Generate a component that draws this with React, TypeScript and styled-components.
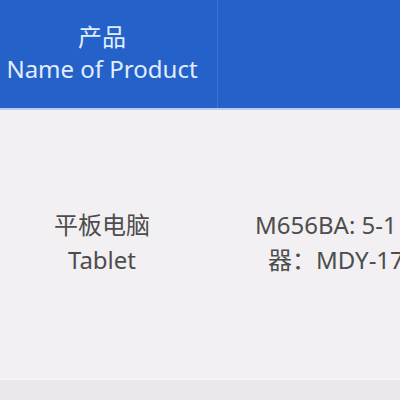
import React from "react";
import styled, { createGlobalStyle } from "styled-components";

const Global = createGlobalStyle`
  html, body { margin: 0; padding: 0; background: #eae8ea; }
  body { font-family: "Noto Sans", "Noto Sans CJK SC", sans-serif; }
`;

const Table = styled.div`
  width: 400px;
  height: 400px;
  overflow: hidden;
  display: flex;
  flex-direction: column;
  background: #eae8ea;
`;

const Row = styled.div<{ $header?: boolean; $h: number }>`
  display: grid;
  grid-template-columns: 217px 1px 182px;
  height: ${(p) => p.$h}px;
  background: ${(p) => (p.$header ? "#2462c9" : "#f2f0f2")};
  color: ${(p) => (p.$header ? "#e2edff" : "#4d4d4d")};
  border-bottom: ${(p) => (p.$header ? "2px solid #b9cdea" : "2px solid #f7f5f7")};
  flex-shrink: 0;
  box-sizing: border-box;
`;

const Divider = styled.div<{ $show?: boolean }>`
  background: ${(p) => (p.$show ? "#3b74d6" : "transparent")};
`;

const Cell = styled.div<{ $pt?: number }>`
  display: flex;
  flex-direction: column;
  justify-content: center;
  align-items: center;
  padding-right: 13px;
  padding-bottom: ${(p) => p.$pt ?? 0}px;
  font-size: 24px;
  white-space: nowrap;
`;

const Line = styled.div<{ $lh: number }>`
  line-height: ${(p) => p.$lh}px;
`;

const ValueCell = styled.div`
  display: flex;
  flex-direction: column;
  justify-content: center;
  padding-left: 37px;
  padding-bottom: 4px;
  font-size: 24px;
  white-space: nowrap;
  overflow: hidden;
`;

const IndentLine = styled.div<{ $indent: number }>`
  line-height: 35px;
  padding-left: ${(p) => p.$indent}px;
`;

export default function App() {
  return (
    <>
      <Global />
      <Table>
        <Row $header $h={110}>
          <Cell $pt={3}>
            <Line $lh={32}>产品</Line>
            <Line $lh={32}>Name of Product</Line>
          </Cell>
          <Divider $show />
          <Cell />
        </Row>
        <Row $h={270}>
          <Cell $pt={4}>
            <Line $lh={35}>平板电脑</Line>
            <Line $lh={35}>Tablet</Line>
          </Cell>
          <Divider />
          <ValueCell>
            <IndentLine $indent={0}>M656BA: 5-1</IndentLine>
            <IndentLine $indent={13}>器：MDY-17</IndentLine>
          </ValueCell>
        </Row>
      </Table>
    </>
  );
}
